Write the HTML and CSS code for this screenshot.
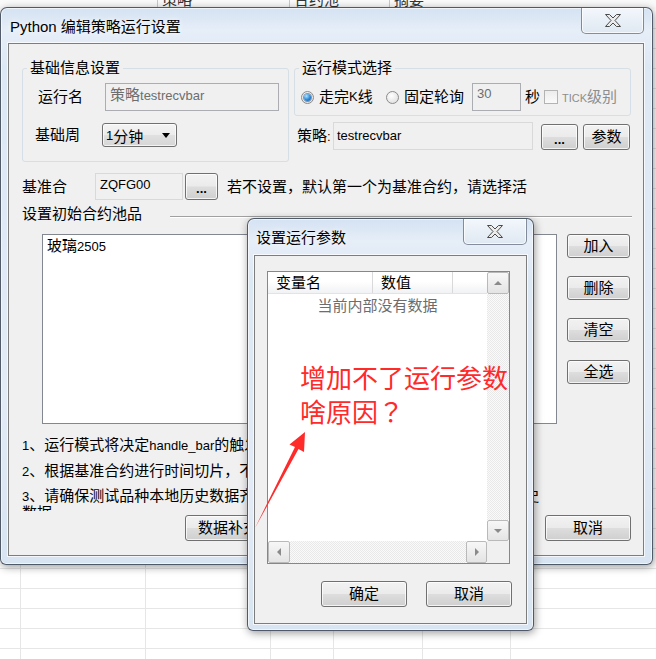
FILE: index.html
```html
<!DOCTYPE html>
<html lang="zh-CN">
<head>
  <meta charset="UTF-8">
  <meta name="viewport" content="width=device-width, initial-scale=1.0">
  <title>Python 编辑策略运行设置</title>
  <link rel="stylesheet" href="styles.css">
</head>
<body>

  <!-- spreadsheet behind the dialogs -->
  <div class="sheet-head">
    <span class="hcol h1"></span>
    <span class="hcol h2">策略</span>
    <span class="hcol h3">合约池</span>
    <span class="hcol h4">摘要</span>
  </div>

  <!-- Main dialog -->
  <div class="win win-main">
    <div class="titlebar">
      <span class="title">Python 编辑策略运行设置</span>
      <div class="close">
        <svg width="18" height="15" viewBox="0 0 18 15"><polygon points="1.5,1.5 5.5,1.5 9,5 12.5,1.5 16.5,1.5 11,7.5 16.5,13.5 12.5,13.5 9,10 5.5,13.5 1.5,13.5 7,7.5" fill="#ececec" stroke="#4a4a4a" stroke-width="1" stroke-linejoin="round"/></svg>
      </div>
    </div>
    <div class="client main-client">

      <div class="top-row">
        <fieldset class="group group-info">
          <legend>基础信息设置</legend>
          <div class="group-body info-body">
            <div class="field-row">
              <span class="lbl">运行名</span>
              <div class="edit name-edit">策略<span class="en">testrecvbar</span></div>
            </div>
            <div class="field-row row-period">
              <span class="lbl">基础周</span>
              <div class="combo"><span class="en">1</span>分钟<span class="caret"></span></div>
            </div>
          </div>
        </fieldset>

        <div class="right-col">
          <fieldset class="group group-mode">
            <legend>运行模式选择</legend>
            <div class="group-body mode-row">
              <div class="radio-item w1"><span class="radio on"></span>走完<span class="en">K</span>线</div>
              <div class="radio-item w2"><span class="radio"></span>固定轮询</div>
              <div class="edit sec-edit"><span class="en">30</span></div>
              <span class="unit">秒</span>
              <span class="check"></span>
              <span class="tick"><span class="en sm">TICK</span>级别</span>
            </div>
          </fieldset>
          <div class="strategy-row">
            <span class="lbl-s">策略<span class="en">:</span></span>
            <div class="edit soft strategy-edit"><span class="en">testrecvbar</span></div>
            <button class="btn btn-dots">...</button>
            <button class="btn btn-param">参数</button>
          </div>
        </div>
      </div>

      <div class="base-row">
        <span class="lbl-b">基准合</span>
        <div class="edit soft base-edit"><span class="en">ZQFG00</span></div>
        <button class="btn btn-dots2">...</button>
        <span class="hint">若不设置，默认第一个为基准合约，请选择活跃合约</span>
      </div>

      <div class="pool-row">
        <span>设置初始合约池品</span>
        <span class="sep"></span>
      </div>

      <div class="list-row">
        <div class="pool-list">玻璃<span class="en">2505</span></div>
        <div class="side-btns">
          <button class="btn side">加入</button>
          <button class="btn side">删除</button>
          <button class="btn side btn-clear">清空</button>
          <button class="btn side btn-all">全选</button>
        </div>
      </div>

      <div class="note note1"><span class="en">1</span>、运行模式将决定<span class="en">handle_bar</span>的触发方式</div>
      <div class="note note2"><span class="en">2</span>、根据基准合约进行时间切片，不设置默认第一个合约</div>
      <div class="note note3"><span class="en">3</span>、请确保测试品种本地历史数据齐全，否则请先点击数据补充按钮以下载历史数据</div>

      <div class="bottom-row">
        <button class="btn wide btn-fill">数据补充</button>
        <button class="btn wide btn-cancel">取消</button>
      </div>
    </div>
  </div>

  <!-- Parameter dialog -->
  <div class="win win-param">
    <div class="titlebar">
      <span class="title">设置运行参数</span>
      <div class="close">
        <svg width="18" height="15" viewBox="0 0 18 15"><polygon points="1.5,1.5 5.5,1.5 9,5 12.5,1.5 16.5,1.5 11,7.5 16.5,13.5 12.5,13.5 9,10 5.5,13.5 1.5,13.5 7,7.5" fill="#ececec" stroke="#4a4a4a" stroke-width="1" stroke-linejoin="round"/></svg>
      </div>
    </div>
    <div class="client param-client">
      <div class="listview">
        <div class="lv-main">
          <div class="lv-head">
            <span class="hc hc1">变量名</span>
            <span class="hc hc2">数值</span>
            <span class="hc hc3"></span>
          </div>
          <div class="lv-empty">当前内部没有数据</div>
        </div>
        <div class="vscroll">
          <span class="sb-btn"><i class="arr up"></i></span>
          <span class="sb-track"></span>
          <span class="sb-btn"><i class="arr down"></i></span>
        </div>
        <div class="hscroll">
          <span class="sb-btn sb-left"><i class="arr left"></i></span>
          <span class="sb-track"></span>
          <span class="sb-btn sb-right"><i class="arr right"></i></span>
        </div>
        <div class="corner"></div>
      </div>
      <div class="param-btns">
        <button class="btn wide btn-ok">确定</button>
        <button class="btn wide btn-no">取消</button>
      </div>
    </div>
  </div>

  <!-- annotation on top of the screenshot -->
  <div class="remark">增加不了运行参数<br>啥原因<span class="qm" lang="zh-TW">？</span></div>
  <svg class="arrow" width="656" height="659" viewBox="0 0 656 659">
    <polygon points="305,432 304,452 298.5,449 255,528 295,447 289.5,444.5" fill="#ff2a2a"/>
  </svg>

</body>
</html>
```

FILE: styles.css
```css
* {
  box-sizing: border-box;
}

body {
  margin: 0;
  width: 656px;
  height: 659px;
  overflow: hidden;
  position: relative;
  font-family: "Liberation Sans", "Noto Sans CJK SC", sans-serif;
  font-size: 15px;
  color: #000;
  background-color: #fff;
  background-image:
    linear-gradient(to right, transparent 20px, #e6e6e6 20px 21px, transparent 21px 145px, #e6e6e6 145px 146px, transparent 146px 270px, #e6e6e6 270px 271px, transparent 271px 333px, #e6e6e6 333px 334px, transparent 334px 422px, #e6e6e6 422px 423px, transparent 423px 510px, #e6e6e6 510px 511px, transparent 511px),
    repeating-linear-gradient(to bottom, transparent 0 8px, #e6e6e6 8px 9px, transparent 9px 20px);
}

.en {
  font-size: 13px;
}

.en.sm {
  font-size: 11px;
}

/* background sheet header */
.sheet-head {
  display: flex;
  height: 18px;
  margin-top: -9px;
  line-height: 18px;
  color: #333;
  background: #fafafa;
}

.hcol {
  padding-left: 4px;
  border-left: 1px solid #c9c9c9;
}

.h1 { width: 157px; border-left: none; }
.h2 { width: 132px; }
.h3 { width: 100px; }
.h4 { flex: 1; }

/* windows */
.win {
  position: absolute;
  display: flex;
  flex-direction: column;
  border: 1px solid rgba(45, 55, 70, 0.8);
  border-radius: 7px 7px 6px 6px;
  background: linear-gradient(to bottom, #d4e2f2 0, #e6eef8 22px, #dde8f5 60px, #e2ebf6 70%, #d8e4f1 100%);
  box-shadow: inset 0 0 0 1px rgba(255, 255, 255, 0.6), 1px 2px 9px rgba(0, 0, 0, 0.4);
}

.win-main {
  left: 0;
  top: 7px;
  width: 653px;
  height: 558px;
}

.win-param {
  left: 247px;
  top: 218px;
  width: 287px;
  height: 413px;
}

.titlebar {
  display: flex;
  align-items: flex-start;
  flex: none;
}

.win-main .titlebar {
  height: 35px;
  padding-left: 9px;
}

.win-param .titlebar {
  height: 36px;
  padding-left: 8px;
}

.title {
  padding-top: 9px;
  line-height: 20px;
  color: #000;
  text-shadow: 0 0 6px rgba(255, 255, 255, 0.9);
}

.close {
  margin-left: auto;
  height: 26px;
  display: flex;
  align-items: center;
  justify-content: center;
  border: 1px solid rgba(60, 72, 92, 0.6);
  border-top: none;
  border-radius: 0 0 5px 5px;
  background: linear-gradient(to bottom, #f3f7fc, #dfe8f2);
  box-shadow: inset 0 0 0 1px rgba(255, 255, 255, 0.7);
}

.win-main .close {
  width: 63px;
  margin-right: 8px;
}

.win-param .close {
  width: 64px;
  margin-right: 6px;
}

.client {
  flex: 1;
  display: flex;
  flex-direction: column;
  background: #f0f0f0;
  border: 1px solid #7d7d7d;
  box-shadow: 0 0 0 1px rgba(255, 255, 255, 0.7);
}

.main-client {
  margin: 0 8px 8px 7px;
  padding: 15px 11px 0 13px;
}

.param-client {
  margin: 0 6px 6px 6px;
  padding: 15px 0 0 12px;
}

/* group boxes */
.top-row {
  display: flex;
  align-items: flex-start;
  gap: 5px;
}

.group {
  margin: 0;
  padding: 0;
  min-width: 0;
  border: 1px solid #d5dfe5;
  border-radius: 3px;
}

.group legend {
  margin-left: 4px;
  padding: 0 3px;
  line-height: 18px;
}

.group-info {
  width: 267px;
}

.info-body {
  padding: 6px 0 14px 15px;
}

.field-row {
  display: flex;
  align-items: center;
  height: 28px;
}

.lbl {
  width: 67px;
  line-height: 18px;
}

.row-period {
  margin-top: 12px;
  margin-left: -3px;
  height: 24px;
}

.edit {
  height: 28px;
  padding: 2px 4px 0;
  line-height: 18px;
  border: 1px solid #abadb3;
  background: #f0f0f0;
  white-space: nowrap;
  overflow: hidden;
}

.edit.soft {
  border-color: #d9d9d9;
}

.name-edit {
  width: 174px;
  color: #6d6d6d;
}

.combo {
  display: flex;
  align-items: center;
  width: 75px;
  height: 24px;
  padding-left: 3px;
  border: 1px solid #707070;
  border-radius: 3px;
  background: linear-gradient(to bottom, #f4f4f4 0%, #ececec 48%, #e0e0e0 52%, #d6d6d6 100%);
  box-shadow: inset 0 0 0 1px rgba(255, 255, 255, 0.7);
}

.caret {
  margin-left: auto;
  margin-right: 6px;
  border-left: 4px solid transparent;
  border-right: 4px solid transparent;
  border-top: 5px solid #000;
}

.right-col {
  width: 337px;
  display: flex;
  flex-direction: column;
}

.group-mode {
  width: 337px;
}

.mode-row {
  display: flex;
  align-items: center;
  height: 38px;
  padding: 6px 0 4px 5px;
}

.radio-item {
  display: flex;
  align-items: center;
  line-height: 18px;
}

.w1 { width: 85px; }
.w2 { width: 87px; }

.radio {
  width: 13px;
  height: 13px;
  margin: 0 5px 0 1px;
  display: flex;
  align-items: center;
  justify-content: center;
  border: 1px solid #8b8b8b;
  border-radius: 50%;
  background: radial-gradient(circle at 40% 35%, #ffffff, #d9d9d9);
}

.radio.on::after {
  content: "";
  width: 7px;
  height: 7px;
  border-radius: 50%;
  background: radial-gradient(circle at 35% 30%, #a8e4ff, #2a86d8 55%, #0e4f94);
  box-shadow: 0 0 0 1px rgba(20, 60, 110, 0.5);
}

.sec-edit {
  width: 49px;
  padding-top: 0;
  color: #6d6d6d;
}

.unit {
  margin-left: 4px;
  line-height: 18px;
}

.check {
  width: 14px;
  height: 14px;
  margin-left: 4px;
  border: 1px solid #b3b3b3;
  background: linear-gradient(to bottom, #ececec, #fafafa);
}

.tick {
  margin-left: 4px;
  color: #8d8d8d;
  line-height: 18px;
}

.strategy-row {
  display: flex;
  align-items: center;
  height: 28px;
  margin-top: 6px;
  padding-left: 3px;
}

.lbl-s {
  width: 36px;
  line-height: 18px;
}

.strategy-edit {
  width: 200px;
  padding: 3px 3px 0;
}

/* buttons */
.btn {
  display: flex;
  align-items: center;
  justify-content: center;
  padding: 0;
  font: inherit;
  line-height: 18px;
  color: #000;
  border: 1px solid #707070;
  border-radius: 3px;
  background: linear-gradient(to bottom, #f2f2f2 0%, #ebebeb 48%, #dddddd 52%, #cfcfcf 100%);
  box-shadow: inset 0 0 0 1px rgba(255, 255, 255, 0.75);
}

.btn-dots,
.btn-dots2 {
  font-size: 13px;
  font-weight: bold;
  padding-top: 5px;
}

.btn-dots {
  align-self: flex-end;
  width: 37px;
  height: 26px;
  margin-left: 8px;
}

.btn-param {
  align-self: flex-end;
  width: 47px;
  height: 26px;
  margin-left: 5px;
}

.base-row {
  display: flex;
  align-items: center;
  height: 27px;
  margin-top: 11px;
}

.lbl-b {
  width: 73px;
  line-height: 18px;
}

.base-edit {
  width: 88px;
  height: 27px;
  padding-top: 1px;
}

.btn-dots2 {
  width: 33px;
  height: 27px;
  margin-left: 2px;
}

.hint {
  width: 300px;
  margin-left: 9px;
  line-height: 18px;
  white-space: nowrap;
  overflow: hidden;
}

.pool-row {
  display: flex;
  align-items: center;
  height: 18px;
  margin-top: 5px;
  line-height: 18px;
}

.sep {
  flex: 1;
  align-self: flex-end;
  height: 2px;
  margin: 0 0 5px 28px;
  border-top: 1px solid #a0a0a0;
  border-bottom: 1px solid #fff;
}

.list-row {
  display: flex;
  height: 190px;
  margin-top: 11px;
}

.pool-list {
  width: 515px;
  margin-left: 20px;
  padding: 2px 4px;
  line-height: 18px;
  background: #fff;
  border: 1px solid #828790;
}

.side-btns {
  display: flex;
  flex-direction: column;
  width: 63px;
  margin-left: 10px;
}

.btn.side {
  height: 24px;
}

.side-btns .btn + .btn {
  margin-top: 18px;
}

.side-btns .btn-clear {
  margin-top: 16px;
}

.side-btns .btn-all {
  margin-top: 22px;
}

.note {
  line-height: 16px;
  white-space: nowrap;
}

.note1 { margin-top: 13px; }
.note2 { margin-top: 9px; }

.note3 {
  width: 525px;
  height: 23px;
  margin-top: 8px;
  white-space: normal;
  overflow: hidden;
}

.bottom-row {
  display: flex;
  height: 26px;
  margin-top: 4px;
}

.btn.wide {
  width: 86px;
  height: 26px;
}

.btn-fill {
  margin-left: 163px;
}

.btn-cancel {
  margin-left: auto;
  margin-right: 1px;
}

/* parameter dialog list view */
.listview {
  display: grid;
  grid-template-columns: 1fr 22px;
  grid-template-rows: 1fr 22px;
  width: 243px;
  height: 293px;
  background: #fff;
  border: 1px solid #828790;
}

.lv-head {
  display: flex;
  height: 22px;
  border-bottom: 1px solid #e3e3e3;
  background: linear-gradient(to bottom, #ffffff 0%, #ffffff 45%, #f1f2f4 100%);
}

.hc {
  padding-left: 8px;
  line-height: 21px;
  border-right: 1px solid #d9d9d9;
}

.hc1 { width: 105px; }
.hc2 { width: 80px; }
.hc3 { flex: 1; border-right: none; }

.lv-empty {
  margin-top: 3px;
  line-height: 18px;
  text-align: center;
  color: #6d6d6d;
}

.vscroll {
  display: flex;
  flex-direction: column;
}

.hscroll {
  display: flex;
}

.sb-btn {
  flex: none;
  display: flex;
  align-items: center;
  justify-content: center;
  height: 21px;
  border: 1px solid #b9b9b9;
  border-radius: 2px;
  background: linear-gradient(to bottom, #f7f7f7, #e4e4e4);
}

.vscroll .sb-btn:first-child {
  height: 22px;
}

.hscroll .sb-btn {
  height: auto;
}

.sb-left { width: 22px; }
.sb-right { width: 21px; }

.sb-track {
  flex: 1;
  background: repeating-conic-gradient(#e9e9e9 0 25%, #fafafa 0 50%) 0 0 / 2px 2px;
}

.corner {
  background: #f0f0f0;
}

.arr {
  width: 0;
  height: 0;
  border: 4px solid transparent;
}

.arr.up { border-bottom-color: #8a8a8a; border-top-width: 0; }
.arr.down { border-top-color: #8a8a8a; border-bottom-width: 0; }
.arr.left { border-right-color: #8a8a8a; border-left-width: 0; }
.arr.right { border-left-color: #8a8a8a; border-right-width: 0; }

.param-btns {
  display: flex;
  margin-top: 17px;
}

.btn-ok {
  margin-left: 54px;
}

.btn-no {
  margin-left: 19px;
}

/* red annotation */
.remark {
  position: absolute;
  left: 300px;
  top: 360px;
  font-family: "Noto Sans CJK SC", sans-serif;
  font-size: 26px;
  line-height: 34px;
  color: #ff2a2a;
  white-space: nowrap;
}

.qm {
  font-family: "Noto Sans CJK TC", sans-serif;
}

.arrow {
  position: absolute;
  left: 0;
  top: 0;
  pointer-events: none;
}
```
